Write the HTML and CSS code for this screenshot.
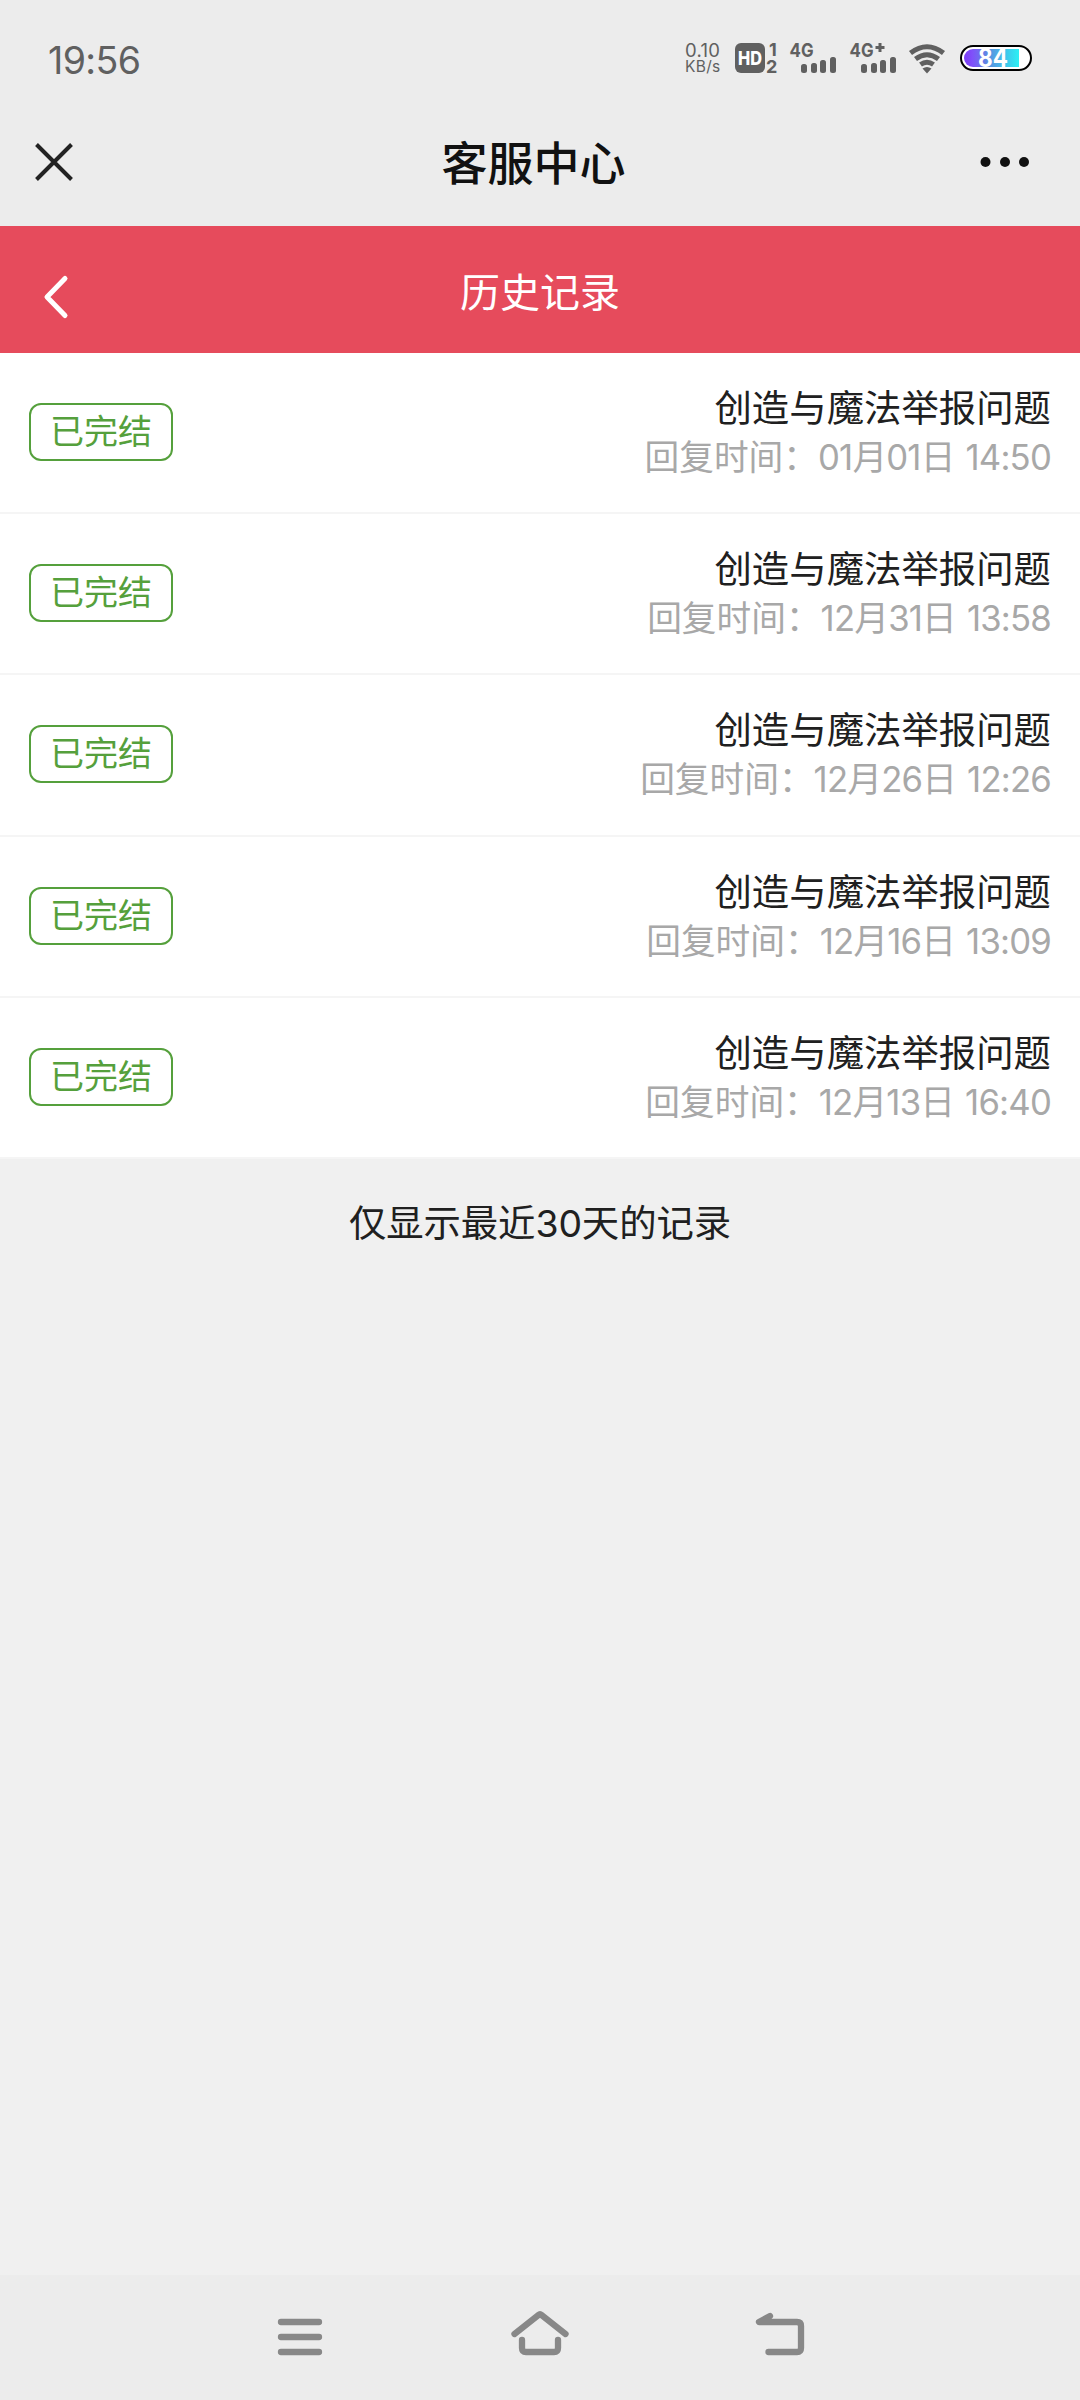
FILE: index.html
```html
<!DOCTYPE html>
<html lang="zh-CN">
<head>
    <meta charset="UTF-8">
    <meta name="viewport" content="width=device-width, initial-scale=1.0">
    <title>客服中心</title>
    <link rel="stylesheet" href="styles.css">
</head>
<body>
    <div class="status-bar">
        <div class="clock">19:56</div>
        <div class="status-icons">
            <div class="net-speed">
                <span class="speed">0.10</span>
                <span class="unit">KB/s</span>
            </div>
            <svg class="hd" width="44" height="36" viewBox="0 0 44 36">
                <rect x="0" y="3" width="30" height="30" rx="6"/>
                <text class="hd-text" x="3" y="25" font-size="19" textLength="24" lengthAdjust="spacingAndGlyphs">HD</text>
                <text x="34" y="16" font-size="18">1</text>
                <text x="31" y="33" font-size="18">2</text>
            </svg>
            <svg class="signal" width="48" height="36" viewBox="0 0 48 36">
                <text x="0.5" y="17" font-size="19" textLength="24" lengthAdjust="spacingAndGlyphs">4G</text>
                <rect x="12" y="24" width="6" height="9" rx="2.5"/>
                <rect x="22" y="23" width="6" height="10" rx="2.5"/>
                <rect x="31" y="20" width="6" height="13" rx="2.5"/>
                <rect x="41" y="17" width="6" height="16" rx="2.5"/>
            </svg>
            <svg class="signal" width="48" height="36" viewBox="0 0 48 36">
                <text x="0.5" y="17" font-size="19" textLength="24" lengthAdjust="spacingAndGlyphs">4G</text>
                <path d="M31 3v9M26.5 7.5h9" stroke="#606060" stroke-width="3"/>
                <rect x="12" y="24" width="6" height="9" rx="2.5"/>
                <rect x="22" y="23" width="6" height="10" rx="2.5"/>
                <rect x="31" y="20" width="6" height="13" rx="2.5"/>
                <rect x="41" y="17" width="6" height="16" rx="2.5"/>
            </svg>
            <svg class="wifi" width="36" height="36" viewBox="0 0 36 36">
                <path d="M1.5 13Q18 0.5 34.5 13"/>
                <path d="M6.5 19Q18 10.5 29.5 19"/>
                <path d="M11.5 24.5Q18 20 24.5 24.5"/>
                <path class="wifi-dot" d="M13.5 28.5Q18 25.5 22.5 28.5L18 33.5Z"/>
            </svg>
            <svg class="battery" width="72" height="36" viewBox="0 0 72 36">
                <defs>
                    <linearGradient id="charge">
                        <stop offset="0" stop-color="#7a3cf5"/>
                        <stop offset="0.15" stop-color="#8050fa"/>
                        <stop offset="0.45" stop-color="#5a90e0"/>
                        <stop offset="1" stop-color="#2cf0f4"/>
                    </linearGradient>
                </defs>
                <rect x="1" y="6" width="70" height="24" rx="12" fill="#fff" stroke="#000" stroke-width="2"/>
                <path d="M13 9H59V27H13A9 9 0 0 1 13 9Z" fill="url(#charge)"/>
                <text x="18" y="27" font-size="25" textLength="30" lengthAdjust="spacingAndGlyphs">84</text>
            </svg>
        </div>
    </div>

    <div class="title-bar">
        <svg class="close" width="38" height="38" viewBox="0 0 38 38">
            <path d="M1.5 1.5L36.5 36.5M36.5 1.5L1.5 36.5"/>
        </svg>
        <h1>客服中心</h1>
        <svg class="more" width="50" height="10" viewBox="0 0 50 10">
            <circle cx="5.5" cy="5" r="5"/>
            <circle cx="25" cy="5" r="5"/>
            <circle cx="44" cy="5" r="5"/>
        </svg>
    </div>

    <div class="page-header">
        <svg class="back" width="24" height="42" viewBox="0 0 24 42">
            <path d="M21 2.5L3 21L21 39.5"/>
        </svg>
        <h2>历史记录</h2>
    </div>

    <ul class="record-list">
        <li class="record">
            <span class="tag">已完结</span>
            <div class="info">
                <div class="subject">创造与魔法举报问题</div>
                <div class="time">回复时间：<span>01月01日 14:50</span></div>
            </div>
        </li>
        <li class="record">
            <span class="tag">已完结</span>
            <div class="info">
                <div class="subject">创造与魔法举报问题</div>
                <div class="time">回复时间：<span>12月31日 13:58</span></div>
            </div>
        </li>
        <li class="record">
            <span class="tag">已完结</span>
            <div class="info">
                <div class="subject">创造与魔法举报问题</div>
                <div class="time">回复时间：<span>12月26日 12:26</span></div>
            </div>
        </li>
        <li class="record">
            <span class="tag">已完结</span>
            <div class="info">
                <div class="subject">创造与魔法举报问题</div>
                <div class="time">回复时间：<span>12月16日 13:09</span></div>
            </div>
        </li>
        <li class="record">
            <span class="tag">已完结</span>
            <div class="info">
                <div class="subject">创造与魔法举报问题</div>
                <div class="time">回复时间：<span>12月13日 16:40</span></div>
            </div>
        </li>
    </ul>

    <p class="tip">仅显示最近30天的记录</p>

    <div class="nav-bar">
        <svg width="60" height="60" viewBox="0 0 60 60">
            <path d="M11 15H49M11 30H49M11 45H49"/>
        </svg>
        <svg width="60" height="60" viewBox="0 0 60 60">
            <path d="M4.5 27L28.5 8Q30 6.5 31.5 8L55.5 27"/>
            <path d="M12 33V41Q12 45 16 45H44Q48 45 48 41V33"/>
        </svg>
        <svg width="60" height="60" viewBox="0 0 60 60">
            <path d="M20 9L9 15H47Q51 15 51 19V41Q51 45 47 45H18.5"/>
        </svg>
    </div>
</body>
</html>
```
FILE: styles.css
```css
* {
    box-sizing: border-box;
}
body {
    display: flex;
    flex-direction: column;
    min-height: 2400px;
    margin: 0;
    background-color: #f0f0f0;
    color: #202020;
    font-family: Inter, "Noto Sans CJK SC", sans-serif;
}
svg {
    display: block;
    flex-shrink: 0;
    overflow: visible;
}

/* Status bar */
.status-bar {
    display: flex;
    justify-content: space-between;
    height: 120px;
    padding: 40px 48px 0 48px;
    background-color: #ececec;
    color: #606060;
}
.clock {
    font-size: 37.5px;
    line-height: 41px;
    letter-spacing: -0.6px;
}
.status-icons {
    display: flex;
    fill: #606060;
}
.net-speed {
    display: flex;
    flex-direction: column;
    width: 50px;
    padding-top: 1px;
}
.speed {
    font-size: 18.5px;
    line-height: 18px;
    letter-spacing: 0.3px;
}
.unit {
    font-size: 15.5px;
    line-height: 16px;
    letter-spacing: 0.3px;
}
.hd {
    margin-right: 10px;
    font-weight: 700;
}
.hd-text {
    fill: #fff;
    font-weight: 800;
}
.signal {
    margin-right: 12px;
    font-weight: 700;
}
.wifi {
    margin-right: 15px;
    fill: none;
    stroke: #606060;
    stroke-width: 5px;
}
.wifi-dot {
    fill: #606060;
    stroke: none;
}
.battery text {
    fill: #fff;
    font-weight: 700;
}

/* Title bar */
.title-bar {
    display: flex;
    align-items: center;
    justify-content: space-between;
    height: 106px;
    padding: 0 50px 22px 35px;
    background-color: #ececec;
}
.title-bar h1 {
    margin: 1px 0 0 14px;
    color: #111;
    font-size: 46px;
    font-weight: 500;
    line-height: 60px;
}
.close {
    fill: none;
    stroke: #222;
    stroke-width: 4px;
}
.more {
    fill: #111;
}

/* Page header */
.page-header {
    display: grid;
    grid-template-columns: 43px 1fr 43px;
    align-items: center;
    height: 127px;
    padding-top: 14px;
    background-color: #e64b5c;
    color: #fff;
}
.page-header h2 {
    margin: 0 0 7px;
    font-size: 40px;
    font-weight: 400;
    line-height: 56px;
    text-align: center;
}
.back {
    margin-left: 44px;
    fill: none;
    stroke: #fff;
    stroke-width: 5px;
    stroke-linecap: round;
    stroke-linejoin: round;
}

/* Records */
.record-list {
    margin: 0;
    padding: 0;
    background-color: #fff;
    list-style: none;
}
.record {
    display: flex;
    align-items: center;
    justify-content: space-between;
    height: 161.2px;
    padding: 0 29px;
    border-bottom: 2px solid #f5f5f5;
}
.tag {
    width: 144px;
    height: 58px;
    margin-bottom: 1px;
    border: 2px solid #55a03c;
    border-radius: 12px;
    color: #55a03c;
    font-size: 34px;
    line-height: 53px;
    text-align: center;
}
.info {
    padding-top: 1px;
    text-align: right;
}
.subject {
    font-size: 37.4px;
    line-height: 49px;
}
.time {
    color: #a8a8a8;
    font-size: 34.7px;
    line-height: 49px;
}
.time span {
    letter-spacing: -0.8px;
    word-spacing: 2px;
}

.tip {
    margin: 0;
    padding-top: 38px;
    font-size: 37.4px;
    line-height: 54px;
    letter-spacing: -0.1px;
    text-align: center;
}

/* Navigation bar */
.nav-bar {
    display: flex;
    justify-content: center;
    gap: 180px;
    height: 125px;
    margin-top: auto;
    padding-top: 32px;
    background-color: #ececec;
}
.nav-bar svg {
    fill: none;
    stroke: #888;
    stroke-width: 6.3px;
    stroke-linecap: round;
    stroke-linejoin: round;
}
```
